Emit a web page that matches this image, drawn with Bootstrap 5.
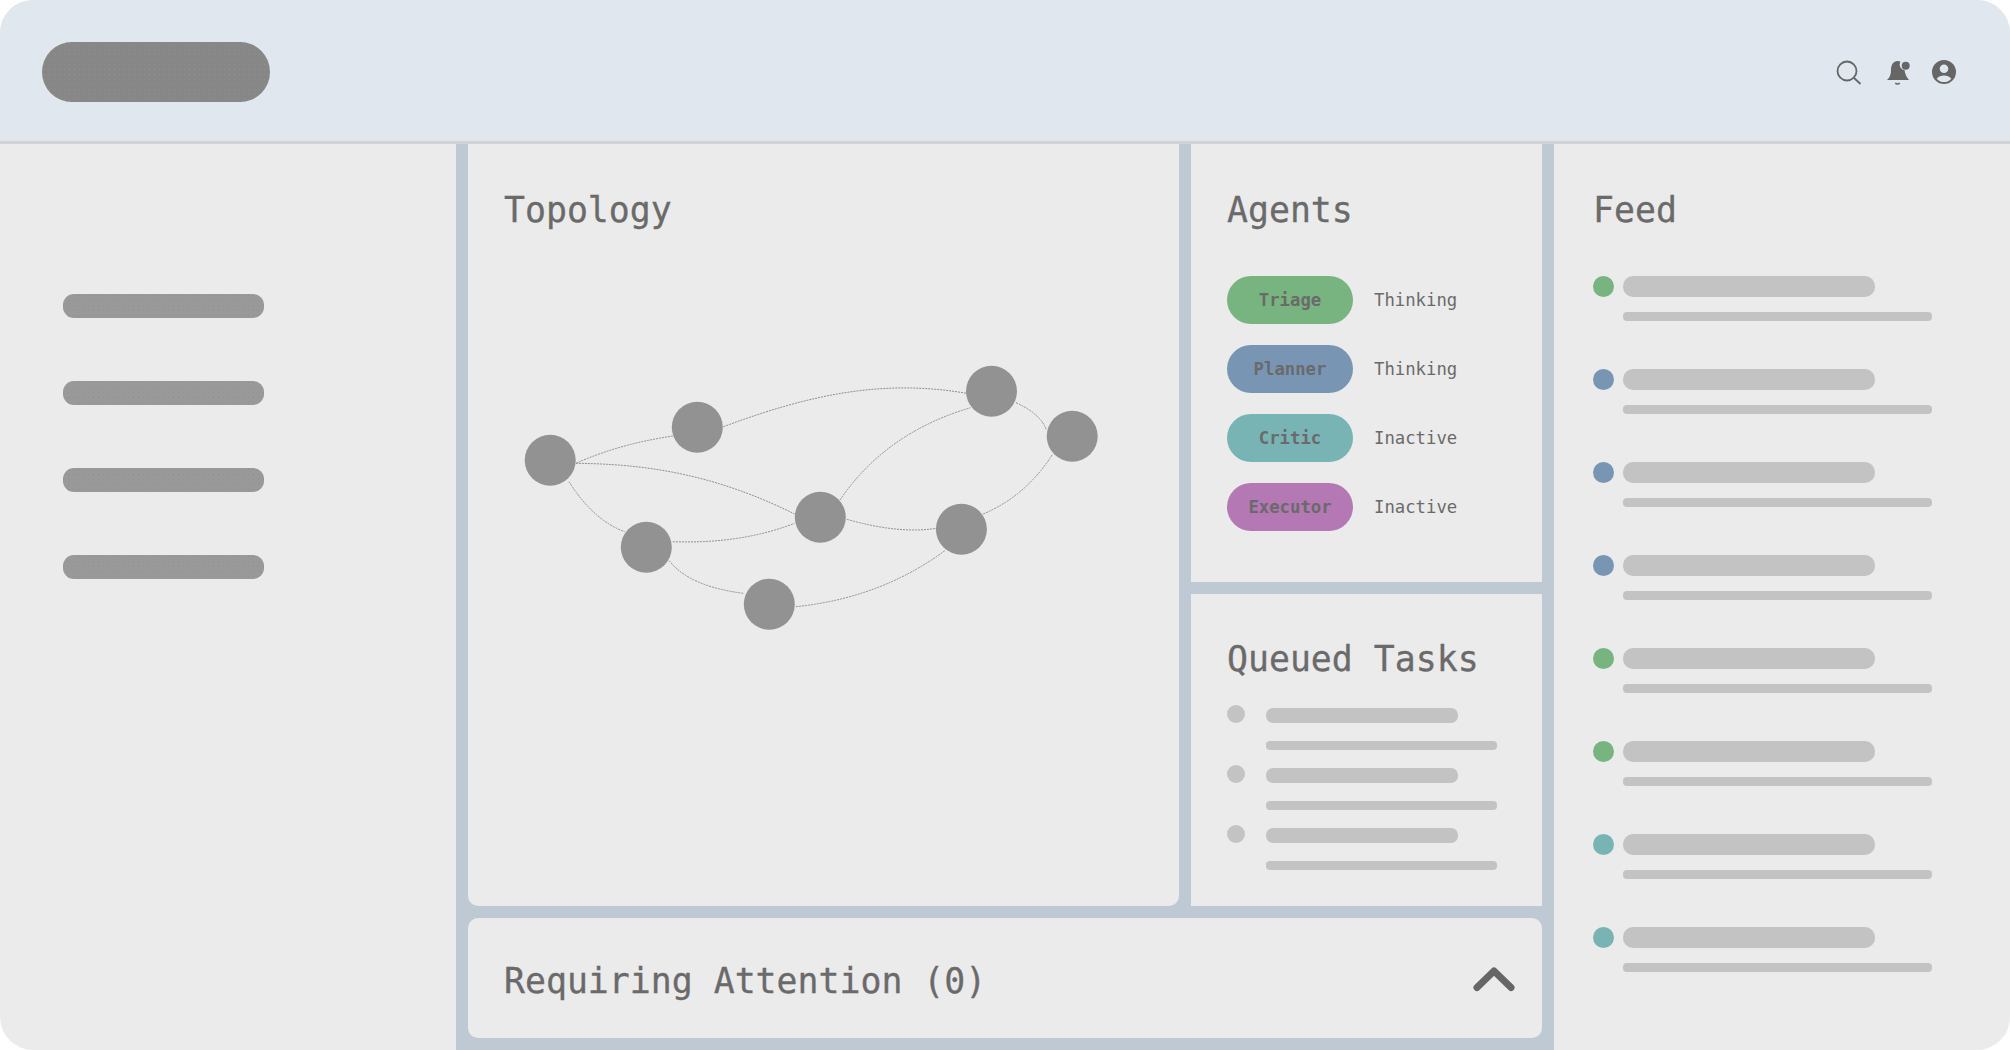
<!DOCTYPE html>
<html lang="en">
<head>
<meta charset="utf-8">
<title>Dashboard</title>
<link href="https://cdn.jsdelivr.net/npm/bootstrap@5.3.0/dist/css/bootstrap.min.css" rel="stylesheet">
<style>
html,body{margin:0;background:#fff;}
.shell{width:2010px;height:1050px;border-radius:33px;overflow:hidden;background:#ebebeb;font-family:"DejaVu Sans Mono","Liberation Mono",monospace;color:#6a6a6a;}
.topbar{height:144px;background:#e0e7ee;border-bottom:3px solid #d1d3d6;padding:0 42px;}
.brand-blob{width:228px;height:60px;border-radius:30px;background-color:#878787;background-image:radial-gradient(#919191 .6px,transparent .9px);background-size:5px 5px;margin-top:3px;}
.tool-icons{gap:19px;margin-right:12px;margin-top:3px;}
.workspace{height:906px;}
.side-rail{width:456px;padding:150px 0 0 63px;gap:63px;}
.rail-bar{width:201px;height:24px;border-radius:11px;background-color:#999;background-image:radial-gradient(#909090 .6px,transparent .9px);background-size:5px 5px;background-position:8px 4px;}
.center-grid{width:1098px;background:#bec9d4;padding:0 12px 12px;display:grid;grid-template-columns:711px 351px;grid-template-rows:438px 312px 120px;gap:12px;}
.panel-box{background:#ebebeb;}
.panel-topo{grid-row:1 / span 2;border-radius:0 0 10px 10px;padding:45px 36px 0;}
.panel-agents{padding:45px 36px 0;}
.panel-queue{padding:44px 36px 0;}
.panel-attn{grid-column:1 / span 2;border-radius:10px;padding:0 27px 0 36px;}
.head-text{font-size:34.85px;line-height:42px;font-weight:400;margin:0;color:#6a6a6a;-webkit-text-stroke:.3px #6a6a6a;}
.head-low{padding-top:6px;}
.topo-svg{display:block;width:711px;height:762px;margin:-87px 0 0 -36px;}
.topo-svg path{fill:none;stroke:#8f8f8f;stroke-width:1;stroke-dasharray:2 1;}
.topo-svg circle{fill:#929292;}
.agent-list{margin-top:45px;gap:21px;}
.agent-pill{width:126px;height:48px;border-radius:24px;font-size:17.3px;font-weight:700;color:#6a6a6a;padding-top:1px;}
.agent-state{font-size:17.3px;margin-left:21px;padding-top:1px;}
.pill-green{background:#78b480;}
.pill-blue{background:#7896b4;}
.pill-teal{background:#78b4b4;}
.pill-violet{background:#b478b4;}
.queue-list{margin-top:25px;}
.queue-row{height:60px;}
.queue-dot{width:18px;height:18px;border-radius:50%;background:#c3c3c3;margin-right:21px;}
.ghost-a{width:192px;height:15px;border-radius:7px;background:#c3c3c3;margin-top:3px;}
.ghost-b{width:231px;height:9px;border-radius:4px;background:#c3c3c3;margin-top:18px;}
.side-feed{width:456px;padding:45px 0 0 39px;}
.feed-list{margin-top:45px;}
.feed-row{height:93px;}
.feed-dot{width:21px;height:21px;border-radius:50%;margin-right:9px;}
.ghost-c{width:252px;height:21px;border-radius:10px;background:#c3c3c3;}
.ghost-d{width:309px;height:9px;border-radius:4px;background:#c3c3c3;margin-top:15px;}
.chev-icon{margin-top:2px;}
</style>
</head>
<body>
<div class="shell">
  <header class="topbar d-flex align-items-center justify-content-between">
    <div class="brand-blob"></div>
    <div class="tool-icons d-flex align-items-center">
      <svg width="32" height="32" viewBox="0 0 32 32" aria-label="Search"><circle cx="15" cy="15" r="9.500" fill="none" stroke="#666" stroke-width="1.800"/><path d="M22 22l6 5.500" stroke="#666" stroke-width="1.800" stroke-linecap="round"/></svg>
      <svg width="30" height="32" viewBox="0 0 30 32" aria-label="Notifications"><path d="M4 24C7 21.500 8 18 8 14 8 8.500 10.500 5 14.500 5 15.800 5 16.800 5.300 17.500 5.800 16.800 7 16.500 8.500 16.800 9.800 17.300 12.200 19.500 14 21.500 14.100 22 18 23.500 21.500 26 24Z" fill="#666"/><circle cx="22.700" cy="9.700" r="4" fill="#666"/><path d="M12.300 27a2.800 2.800 0 0 0 4.400 0" fill="none" stroke="#666" stroke-width="1.500"/></svg>
      <svg width="24" height="24" viewBox="0 0 24 24" aria-label="Account"><path fill="#666" fill-rule="evenodd" d="M12 0a12 12 0 1 1 0 24 12 12 0 0 1 0-24zm0 4.500a4.300 4.300 0 1 0 0 8.600 4.300 4.300 0 0 0 0-8.600zM4.700 18.700a9.600 9.600 0 0 0 14.600 0c-1.800-2-4.500-3.200-7.300-3.200s-5.500 1.200-7.300 3.200z"/></svg>
    </div>
  </header>
  <div class="workspace d-flex">
    <nav class="side-rail d-flex flex-column">
      <div class="rail-bar"></div>
      <div class="rail-bar"></div>
      <div class="rail-bar"></div>
      <div class="rail-bar"></div>
    </nav>
    <main class="center-grid">
      <section class="panel-box panel-topo">
        <h2 class="head-text">Topology</h2>
        <svg class="topo-svg" viewBox="468 144 711 762">
          <path d="M575.900 463.300Q619 444 672.800 436"/>
          <path d="M575.900 463.300C640 464 710 472 794.600 514"/>
          <path d="M569 481.700Q593 519.900 624.600 531.700"/>
          <path d="M723.400 426.700C813.300 393.100 885.500 379.400 966.600 393.300"/>
          <path d="M672.800 541.700Q740.900 544.100 794.600 523.300"/>
          <path d="M669.200 560.700Q689.200 586.400 743.200 593.300"/>
          <path d="M795.800 606.700Q880.900 597.900 944.800 550.700"/>
          <path d="M846.800 519.300Q899.300 534.200 936.100 528.300"/>
          <path d="M840 500Q885.500 432.800 970.500 407.700"/>
          <path d="M983.200 514Q1026 496 1052.800 454"/>
          <path d="M1016 402.700Q1040.300 413.600 1046.500 430"/>
          <circle cx="550.200" cy="460.300" r="25.500"/>
          <circle cx="697.300" cy="427.300" r="25.500"/>
          <circle cx="646.300" cy="547.300" r="25.500"/>
          <circle cx="769.300" cy="604.300" r="25.500"/>
          <circle cx="820.300" cy="517.300" r="25.500"/>
          <circle cx="961.400" cy="529.300" r="25.500"/>
          <circle cx="991.500" cy="391.300" r="25.500"/>
          <circle cx="1072.200" cy="436.300" r="25.500"/>
        </svg>
      </section>
      <section class="panel-box panel-agents">
        <h2 class="head-text">Agents</h2>
        <div class="agent-list d-flex flex-column">
          <div class="d-flex align-items-center"><span class="agent-pill pill-green d-flex align-items-center justify-content-center">Triage</span><span class="agent-state">Thinking</span></div>
          <div class="d-flex align-items-center"><span class="agent-pill pill-blue d-flex align-items-center justify-content-center">Planner</span><span class="agent-state">Thinking</span></div>
          <div class="d-flex align-items-center"><span class="agent-pill pill-teal d-flex align-items-center justify-content-center">Critic</span><span class="agent-state">Inactive</span></div>
          <div class="d-flex align-items-center"><span class="agent-pill pill-violet d-flex align-items-center justify-content-center">Executor</span><span class="agent-state">Inactive</span></div>
        </div>
      </section>
      <section class="panel-box panel-queue">
        <h2 class="head-text">Queued Tasks</h2>
        <div class="queue-list">
          <div class="queue-row d-flex"><div class="queue-dot"></div><div><div class="ghost-a"></div><div class="ghost-b"></div></div></div>
          <div class="queue-row d-flex"><div class="queue-dot"></div><div><div class="ghost-a"></div><div class="ghost-b"></div></div></div>
          <div class="queue-row d-flex"><div class="queue-dot"></div><div><div class="ghost-a"></div><div class="ghost-b"></div></div></div>
        </div>
      </section>
      <section class="panel-box panel-attn d-flex align-items-center justify-content-between">
        <h2 class="head-text head-low">Requiring Attention (0)</h2>
        <svg class="chev-icon" width="42" height="26" viewBox="0 0 42 26" aria-label="Collapse"><path d="M4 21.500L21 5l17 16.500" fill="none" stroke="#666" stroke-width="7" stroke-linecap="round" stroke-linejoin="round"/></svg>
      </section>
    </main>
    <aside class="side-feed">
      <h2 class="head-text">Feed</h2>
      <div class="feed-list">
        <div class="feed-row d-flex"><div class="feed-dot pill-green"></div><div><div class="ghost-c"></div><div class="ghost-d"></div></div></div>
        <div class="feed-row d-flex"><div class="feed-dot pill-blue"></div><div><div class="ghost-c"></div><div class="ghost-d"></div></div></div>
        <div class="feed-row d-flex"><div class="feed-dot pill-blue"></div><div><div class="ghost-c"></div><div class="ghost-d"></div></div></div>
        <div class="feed-row d-flex"><div class="feed-dot pill-blue"></div><div><div class="ghost-c"></div><div class="ghost-d"></div></div></div>
        <div class="feed-row d-flex"><div class="feed-dot pill-green"></div><div><div class="ghost-c"></div><div class="ghost-d"></div></div></div>
        <div class="feed-row d-flex"><div class="feed-dot pill-green"></div><div><div class="ghost-c"></div><div class="ghost-d"></div></div></div>
        <div class="feed-row d-flex"><div class="feed-dot pill-teal"></div><div><div class="ghost-c"></div><div class="ghost-d"></div></div></div>
        <div class="feed-row d-flex"><div class="feed-dot pill-teal"></div><div><div class="ghost-c"></div><div class="ghost-d"></div></div></div>
      </div>
    </aside>
  </div>
</div>
<script src="https://cdn.jsdelivr.net/npm/bootstrap@5.3.0/dist/js/bootstrap.bundle.min.js"></script>
</body>
</html>
